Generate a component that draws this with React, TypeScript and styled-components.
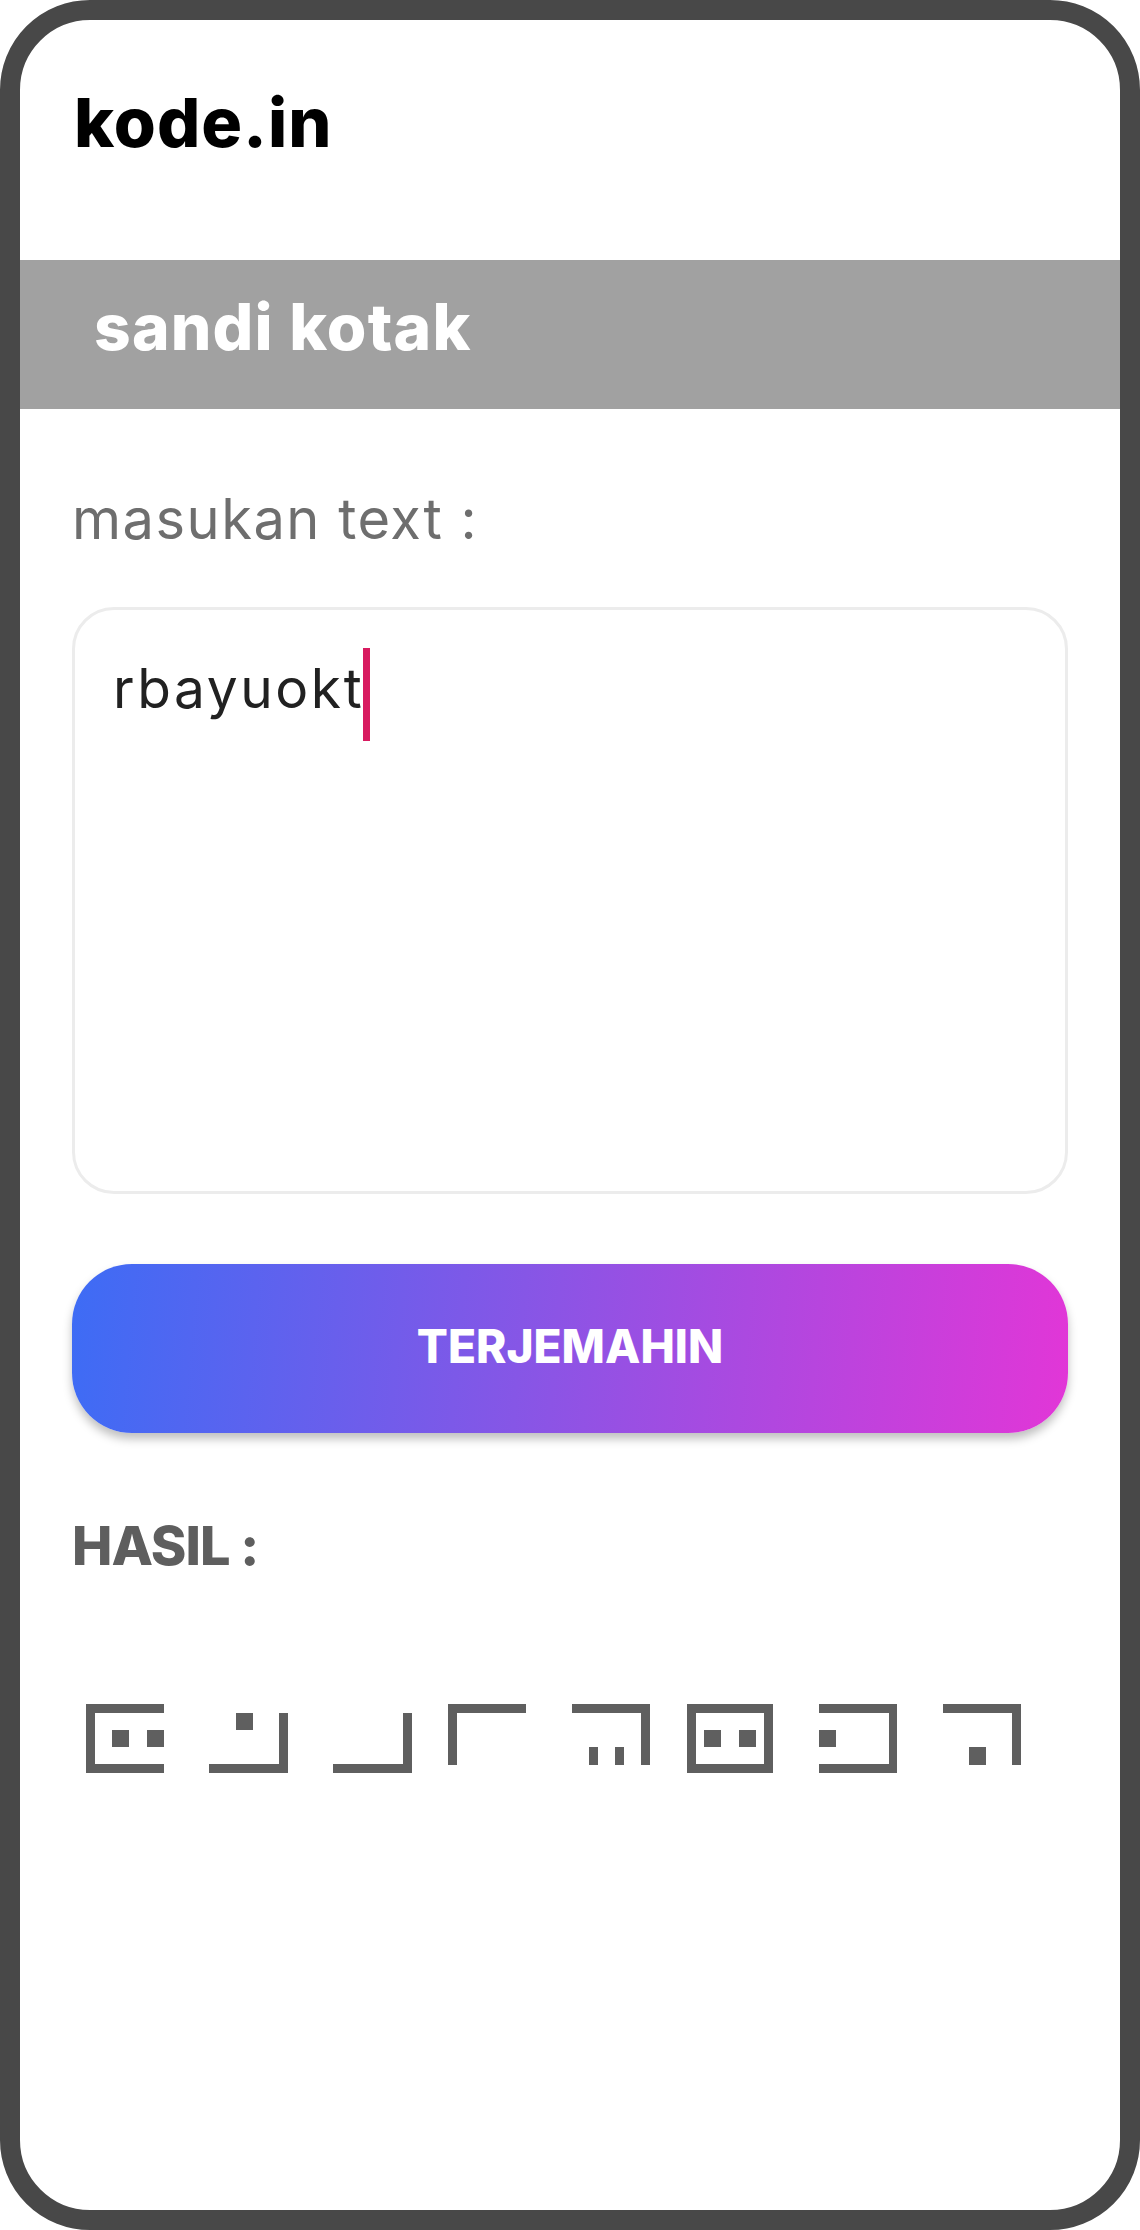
import React from "react";
import styled, { createGlobalStyle } from "styled-components";

const GlobalStyle = createGlobalStyle`
  html, body {
    margin: 0;
    padding: 0;
    background: #fff;
  }
  body {
    font-family: "Inter", "Liberation Sans", sans-serif;
  }
`;

type Rect = [number, number, number, number];

// sandi kotak (pigpen) glyphs for "rbayuokt", drawn as bars and dots
const glyphs: { advance: number; rects: Rect[] }[] = [
  {
    advance: 123,
    rects: [
      [0, 0, 78, 9],
      [0, 0, 9, 69],
      [0, 60, 78, 9],
      [26, 26, 17, 17],
      [61, 26, 17, 17],
    ],
  },
  {
    advance: 124,
    rects: [
      [70, 9, 9, 60],
      [0, 60, 79, 9],
      [27, 9, 17, 17],
    ],
  },
  {
    advance: 115,
    rects: [
      [70, 9, 9, 60],
      [0, 60, 79, 9],
    ],
  },
  {
    advance: 124,
    rects: [
      [0, 0, 78, 9],
      [0, 0, 9, 61],
    ],
  },
  {
    advance: 115,
    rects: [
      [0, 0, 78, 9],
      [69, 0, 9, 61],
      [17, 43, 9, 18],
      [43, 43, 9, 18],
    ],
  },
  {
    advance: 132,
    rects: [
      [0, 0, 86, 9],
      [0, 0, 9, 69],
      [77, 0, 9, 69],
      [0, 60, 86, 9],
      [17, 26, 17, 17],
      [52, 26, 17, 17],
    ],
  },
  {
    advance: 124,
    rects: [
      [0, 0, 78, 9],
      [70, 0, 8, 69],
      [0, 60, 78, 9],
      [0, 26, 17, 17],
    ],
  },
  {
    advance: 78,
    rects: [
      [0, 0, 78, 9],
      [69, 0, 9, 61],
      [26, 43, 17, 18],
    ],
  },
];

const App = () => {
  return (
    <>
      <GlobalStyle />
      <Frame>
        <Header>
          <Logo>kode.in</Logo>
        </Header>

        <Banner>
          <BannerTitle>sandi kotak</BannerTitle>
        </Banner>

        <Main>
          <Label>masukan text :</Label>
          <InputBox>
            <InputText>
              rbayuokt
              <Caret />
            </InputText>
          </InputBox>

          <TranslateButton type="button">TERJEMAHIN</TranslateButton>

          <ResultTitle>HASIL :</ResultTitle>
          <GlyphRow>
            {glyphs.map((g, i) => (
              <Glyph key={i} width={g.advance} height={69} viewBox={`0 0 ${g.advance} 69`}>
                {g.rects.map(([x, y, w, h], j) => (
                  <rect key={j} x={x} y={y} width={w} height={h} />
                ))}
              </Glyph>
            ))}
          </GlyphRow>
        </Main>
      </Frame>
    </>
  );
};

export default App;

const Frame = styled.div`
  width: 1140px;
  height: 2230px;
  box-sizing: border-box;
  border: 20px solid #484848;
  border-radius: 90px;
  background: #fff;
  overflow: hidden;
  display: flex;
  flex-direction: column;
`;

const Header = styled.header`
  height: 240px;
  box-sizing: border-box;
  padding: 68px 0 0 54px;
`;

const Logo = styled.h1`
  margin: 0;
  font-size: 68px;
  line-height: 1;
  font-weight: 800;
  color: #000;
  letter-spacing: 1px;
`;

const Banner = styled.div`
  height: 149px;
  box-sizing: border-box;
  background: #a1a1a1;
  padding: 35px 0 0 74px;
`;

const BannerTitle = styled.h2`
  margin: 0;
  font-size: 64px;
  line-height: 1;
  font-weight: 800;
  color: #fff;
  letter-spacing: 1.2px;
`;

const Main = styled.main`
  padding: 84px 52px 0 52px;
  display: flex;
  flex-direction: column;
`;

const Label = styled.div`
  font-size: 56px;
  line-height: 1;
  font-weight: 400;
  color: #6e6e6e;
  letter-spacing: 1.5px;
  margin-top: -2px;
`;

const InputBox = styled.div`
  margin-top: 60px;
  height: 587px;
  box-sizing: border-box;
  border: 3px solid #ececec;
  border-radius: 42px;
  padding: 38px 36px 0 38px;
`;

const InputText = styled.div`
  font-size: 55px;
  line-height: 55px;
  font-weight: 400;
  color: #212121;
  letter-spacing: 2.6px;
`;

const Caret = styled.span`
  display: inline-block;
  width: 7px;
  height: 93px;
  margin-left: -1px;
  background: #d81b60;
  vertical-align: -33px;
`;

const TranslateButton = styled.button`
  margin-top: 70px;
  height: 169px;
  border: none;
  border-radius: 60px;
  background: linear-gradient(95deg, #3d6cf5 0%, #8656e6 45%, #e236d7 100%);
  box-shadow: 0 6px 10px rgba(0, 0, 0, 0.25);
  color: #fff;
  font-family: "Inter", "Liberation Sans", sans-serif;
  font-size: 46px;
  line-height: 1;
  font-weight: 800;
  padding: 0 0 6px 0;
  display: flex;
  align-items: center;
  justify-content: center;
  cursor: pointer;
`;

const ResultTitle = styled.div`
  margin-top: 86px;
  font-size: 54px;
  line-height: 1;
  font-weight: 800;
  color: #5e5e5e;
  letter-spacing: -1px;
`;

const GlyphRow = styled.div`
  margin-top: 131px;
  padding-left: 14px;
  display: flex;
  align-items: flex-start;
`;

const Glyph = styled.svg`
  display: block;
  flex: none;
  fill: #5f5f5f;
`;
